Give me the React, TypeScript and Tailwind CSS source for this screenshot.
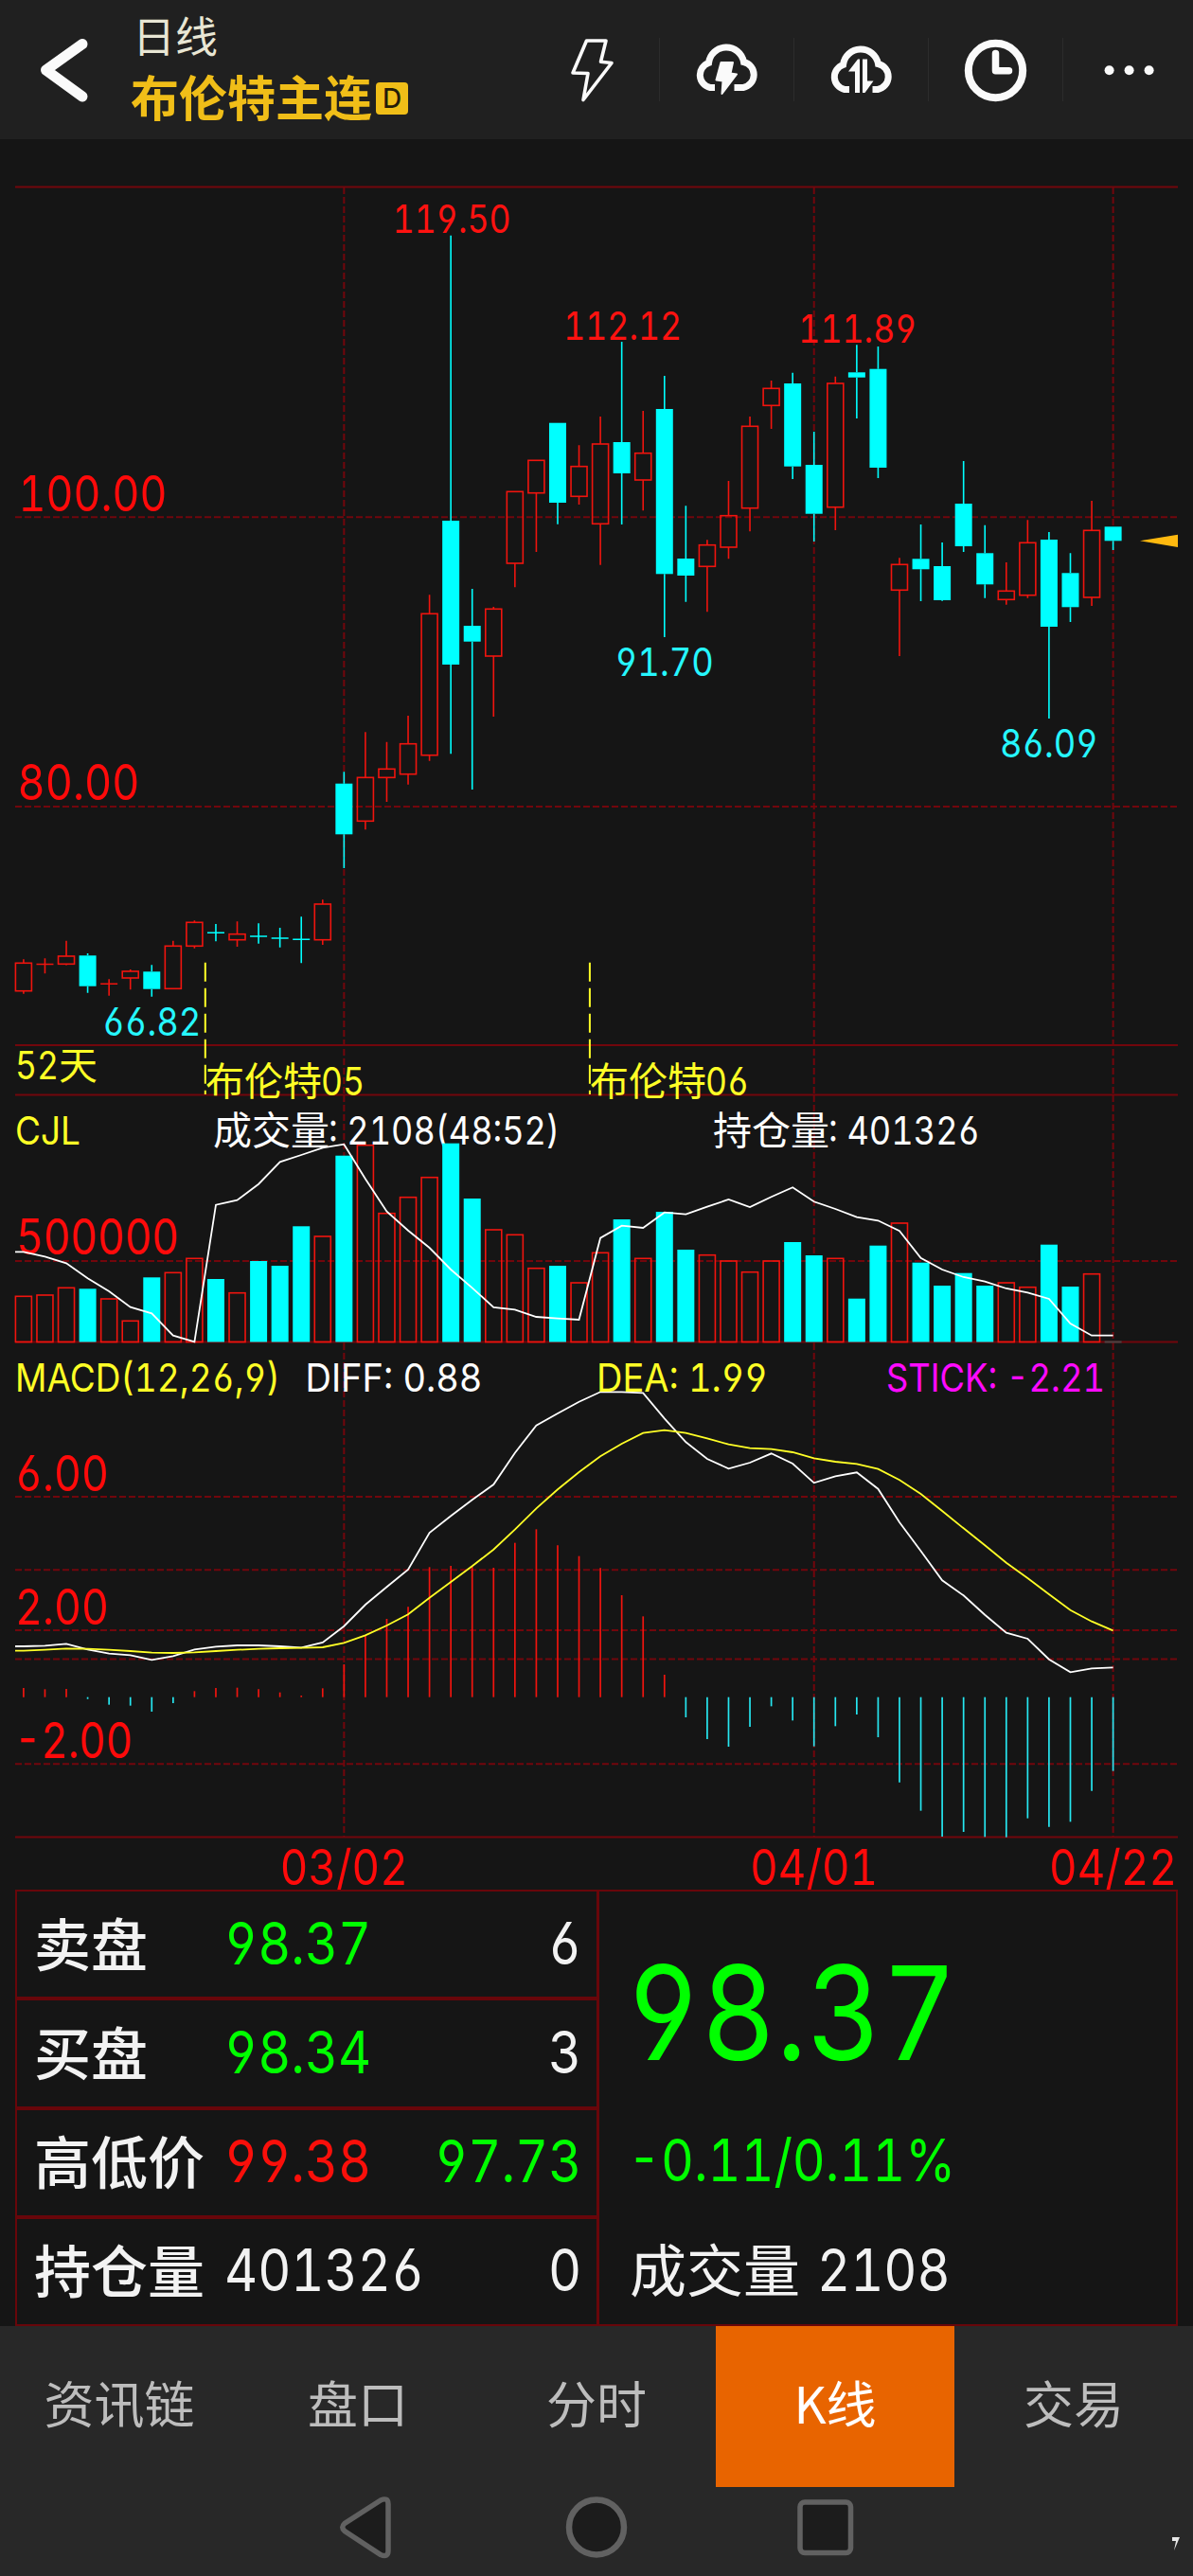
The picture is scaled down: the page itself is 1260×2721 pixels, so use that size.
import type { ReactNode } from 'react'
import { clsx } from 'clsx'

// kind, high, body top, body bottom, low, volume top
type Candle = ['u' | 'd', number, number, number, number, number]

const CANDLES: Candle[] = [
  ['u', 1013.3, 1017.3, 1046.7, 1049.7, 1369.3],
  ['u', 1012.3, 1018.5, 1018.5, 1028.3, 1368],
  ['u', 993.7, 1010, 1018.3, 1019.5, 1360.3],
  ['d', 1007, 1009.3, 1041.7, 1048.7, 1361.3],
  ['u', 1034.3, 1039.3, 1039.3, 1051.7, 1372],
  ['u', 1024, 1026, 1033, 1045.3, 1395.3],
  ['d', 1019.3, 1026.3, 1044.7, 1052.7, 1349.3],
  ['u', 993.7, 999.3, 1044.3, 1044.5, 1344.3],
  ['u', 972.3, 974.3, 999.3, 1001.7, 1329.3],
  ['d', 976, 985.3, 985.3, 994.3, 1351],
  ['u', 973.3, 986.7, 992.7, 1000, 1365.7],
  ['d', 975.3, 989, 989, 996.7, 1332],
  ['d', 980, 991, 991, 1000.7, 1337],
  ['d', 968.3, 992.3, 992.3, 1017.3, 1295.3],
  ['u', 950.3, 955, 992.7, 998, 1306],
  ['d', 815.3, 827.7, 881.3, 917, 1220.7],
  ['u', 773.3, 821.3, 867.3, 876.3, 1209.7],
  ['u', 783.7, 812.3, 821.3, 847, 1281.7],
  ['u', 756, 785.7, 817.7, 828.7, 1264.7],
  ['u', 628.3, 648.3, 797.7, 803.7, 1243.7],
  ['d', 248.7, 550, 702, 796.3, 1207.7],
  ['d', 622, 661, 677.7, 834, 1266],
  ['u', 641, 643.3, 693, 757, 1299],
  ['u', 519.3, 519.3, 595, 620.3, 1304.3],
  ['u', 486.3, 486.3, 520.7, 583, 1339.7],
  ['d', 446.7, 446.7, 531, 553.7, 1337],
  ['u', 470.3, 492.7, 524.3, 533, 1355],
  ['u', 440, 469, 553.3, 596.7, 1323.3],
  ['d', 361, 467, 500, 554, 1288],
  ['u', 434, 478.7, 507, 539.3, 1329.3],
  ['d', 397, 432, 606.3, 673, 1280],
  ['d', 534.3, 590, 608, 635.7, 1320],
  ['u', 570.3, 575.7, 598.3, 646.3, 1325.7],
  ['u', 508, 544.7, 578, 590.3, 1332],
  ['u', 440, 450.3, 536.7, 561.3, 1343.7],
  ['u', 402, 410.3, 428.3, 453, 1332],
  ['d', 393.7, 405, 492.7, 506, 1312],
  ['d', 456, 491, 542.7, 572, 1326],
  ['u', 397.7, 405, 535.7, 560, 1329.3],
  ['d', 364.3, 393.3, 398.7, 442, 1371.7],
  ['d', 366, 389.7, 494, 505, 1315.7],
  ['u', 589.3, 596.3, 623.3, 693, 1292],
  ['d', 554, 590.3, 601.3, 635, 1333.7],
  ['d', 573, 598, 634, 634.7, 1358],
  ['d', 487, 532, 577, 583, 1344.7],
  ['d', 554.7, 584.3, 617.3, 631.7, 1358],
  ['u', 594, 624.3, 633.3, 638.7, 1355],
  ['u', 549.3, 573.3, 628.7, 631.7, 1359.7],
  ['d', 562, 570, 662, 759, 1314.7],
  ['d', 584.3, 605.3, 641.3, 657, 1359],
  ['u', 529, 560.3, 631, 640, 1345.7],
  ['d', 556.3, 556.3, 571.3, 581, 1417.3],
]

// Series below are in thirds of a pixel from the given base line
const OPEN_INTEREST = [
  487, 502, 523, 571, 612, 662, 682, 752, 772, 338, 323, 272, 202, 180, 157, 146, 256, 359, 419, 474, 543, 601, 663,
  670, 693, 698, 702, 443, 404, 411, 362, 368, 344, 321, 345, 313, 283, 328, 351, 377, 388, 421, 506, 543, 567, 581,
  603, 616, 636, 714, 752, 752,
]

const DIFF = [
  537, 535, 529, 547, 560, 565, 580, 568, 547, 538, 534, 534, 537, 541, 525, 473, 405, 349, 294, 177, 124, 73, 24, -76,
  -163, -201, -238, -269, -269, -266, -185, -110, -57, -26, -45, -74, -42, 19, -2, -14, 38, 144, 235, 328, 376, 437,
  494, 513, 578, 619, 607, 604,
]

const DEA = [
  551, 548, 544, 545, 548, 552, 557, 558, 556, 552, 548, 545, 543, 542, 540, 526, 502, 471, 436, 383, 333, 283, 230,
  167, 100, 40, -15, -65, -105, -139, -148, -139, -122, -103, -91, -88, -78, -59, -48, -41, -25, 10, 54, 108, 163, 217,
  272, 321, 372, 422, 458, 487,
]

const STICK = [
  669, 673, 672, 704, 722, 725, 744, 717, 679, 669, 668, 673, 683, 693, 670, 594, 502, 450, 412, 286, 282, 285, 288,
  209, 166, 217, 251, 289, 375, 442, 627, 762, 831, 855, 792, 727, 772, 854, 790, 753, 825, 968, 1058, 1140, 1125, 1141,
  1142, 1082, 1109, 1093, 995, 932,
]

const UP = '#f0140e'
const DOWN = '#00ffff'
const GRID = '#72060c'
const YELLOW = '#ffff26'
const LEFT = 16
const RIGHT = 1244
const VOL_BASE = 1417.5
const STICK_ZERO = 698

const cx = (i: number) => 24.9 + i * 22.563

function toPoints(series: number[], base: number) {
  const pts = series.map((v, i) => `${cx(i).toFixed(1)},${(base + v / 3).toFixed(1)}`)
  return [`${LEFT},${(base + series[0] / 3).toFixed(1)}`, ...pts].join(' ')
}

interface LabelProps {
  x: number
  y: number
  w: number
  fill: string
  size?: number
  middle?: boolean
  children: string
}

function Label({ x, y, w, fill, size = 41, middle, children }: LabelProps) {
  return (
    <text
      x={middle ? x - w / 2 : x}
      y={y}
      fill={fill}
      fontSize={size}
      textLength={w}
      lengthAdjust="spacingAndGlyphs"
      className="font-[Inter,sans-serif] [font-feature-settings:'tnum','cv03','cv04']"
    >
      {children}
    </text>
  )
}

function Han({ x, y, fill, children }: { x: number; y: number; fill: string; children: string }) {
  return (
    <text x={x} y={y} fill={fill} fontSize={41} className="font-['Noto_Sans_CJK_SC',sans-serif]">
      {children}
    </text>
  )
}

function HLine({ y, dashed }: { y: number; dashed?: boolean }) {
  return (
    <line x1={LEFT} x2={RIGHT} y1={y} y2={y} stroke={GRID} strokeWidth={2} strokeDasharray={dashed ? '7 3' : undefined} />
  )
}

function VLines({ y1, y2 }: { y1: number; y2: number }) {
  return (
    <g stroke={GRID} strokeWidth={2} strokeDasharray="7 3">
      {[15, 37, 51].map((i) => (
        <line key={i} x1={cx(i)} x2={cx(i)} y1={y1} y2={y2} />
      ))}
    </g>
  )
}

function PricePanel() {
  return (
    <svg className="block overflow-visible" width="1260" height="1010" viewBox="0 147 1260 1010">
      <HLine y={197.5} />
      <HLine y={546.3} dashed />
      <HLine y={852} dashed />
      <HLine y={1104} />
      <HLine y={1156.5} />
      <VLines y1={198} y2={1157} />

      {CANDLES.map(([kind, high, top, bottom, low], i) => {
        const x = cx(i)
        const color = kind === 'u' ? UP : DOWN
        if (bottom - top < 1) {
          return (
            <path key={i} d={`M${x} ${high}V${low}M${x - 9} ${top}H${x + 9}`} stroke={color} strokeWidth={1.6} />
          )
        }
        return (
          <g key={i} stroke={color} strokeWidth={1.6}>
            <path d={`M${x} ${high}V${top}M${x} ${bottom}V${low}`} />
            {kind === 'u' ? (
              <rect x={x - 8.5} y={top} width={17} height={bottom - top} fill="none" />
            ) : (
              <rect x={x - 9} y={top} width={18} height={bottom - top} fill={DOWN} stroke="none" />
            )}
          </g>
        )
      })}

      <polygon points="1204,571.3 1244,564.7 1244,578" fill="#ffb90f" />

      {[216.8, 622.9].map((x) => (
        <line key={x} x1={x} x2={x} y1={1016.7} y2={1156} stroke={YELLOW} strokeWidth={2} strokeDasharray="20 7" />
      ))}

      <Label x={cx(20) + 1} y={246} w={125} fill="#ff1210" middle>119.50</Label>
      <Label x={cx(28) + 1} y={358.7} w={125} fill="#ff1210" middle>112.12</Label>
      <Label x={cx(39) + 1} y={362} w={125} fill="#ff1210" middle>111.89</Label>
      <Label x={cx(30)} y={713.7} w={104} fill="#26f7ff" middle>91.70</Label>
      <Label x={cx(48)} y={799.7} w={104} fill="#26f7ff" middle>86.09</Label>
      <Label x={cx(6)} y={1094} w={104} fill="#26f7ff" middle>66.82</Label>
      <Label x={19.5} y={540} w={157} size={52} fill="#ff0a0a">100.00</Label>
      <Label x={18.5} y={844.7} w={129} size={52} fill="#ff0a0a">80.00</Label>

      <Label x={16} y={1139.7} w={46} fill={YELLOW}>52</Label>
      <Han x={62} y={1140} fill={YELLOW}>天</Han>
      <Han x={217} y={1156.7} fill={YELLOW}>布伦特</Han>
      <Label x={339} y={1156.7} w={46} fill={YELLOW}>05</Label>
      <Han x={623} y={1156.7} fill={YELLOW}>布伦特</Han>
      <Label x={745} y={1156.7} w={46} fill={YELLOW}>06</Label>
    </svg>
  )
}

function VolumePanel() {
  return (
    <svg className="block overflow-visible" width="1260" height="262" viewBox="0 1157 1260 262">
      <HLine y={1332} dashed />
      <HLine y={VOL_BASE} />
      <VLines y1={1157} y2={1419} />
      <Label x={17} y={1324.7} w={172} size={52} fill="#ff0a0a">500000</Label>

      <Label x={16} y={1209} w={69} fill={YELLOW}>CJL</Label>
      <Han x={225} y={1209} fill="#fff">成交量</Han>
      <Label x={347} y={1209} w={244} fill="#fff">: 2108(48:52)</Label>
      <Han x={753} y={1209} fill="#fff">持仓量</Han>
      <Label x={875} y={1209} w={160} fill="#fff">: 401326</Label>

      {CANDLES.slice(0, -1).map(([kind, , , , , top], i) =>
        kind === 'u' ? (
          <rect
            key={i}
            x={cx(i) - 8.5}
            y={top}
            width={17}
            height={VOL_BASE - top}
            fill="none"
            stroke={UP}
            strokeWidth={1.6}
          />
        ) : (
          <rect key={i} x={cx(i) - 9} y={top} width={18} height={VOL_BASE - top} fill={DOWN} />
        ),
      )}
      <path d={`M${cx(51) - 9} 1417.5h18`} stroke="#4a4444" strokeWidth={2} />
      <polyline points={toPoints(OPEN_INTEREST, 1160)} fill="none" stroke="#fff" strokeWidth={1.8} />
    </svg>
  )
}

function MacdPanel() {
  return (
    <svg className="block overflow-visible" width="1260" height="577" viewBox="0 1419 1260 577">
      {[1581, 1658.3, 1722, 1752.5, 1863.3].map((y) => (
        <HLine key={y} y={y} dashed />
      ))}
      <HLine y={1940.5} />
      <VLines y1={1419} y2={1940} />

      {STICK.map((v, i) => (
        <line
          key={i}
          x1={cx(i)}
          x2={cx(i)}
          y1={1560 + STICK_ZERO / 3}
          y2={1560 + v / 3}
          stroke={v < STICK_ZERO ? '#f0140e' : '#26e6f0'}
          strokeWidth={1.7}
        />
      ))}

      <Label x={16} y={1574.7} w={99} size={52} fill="#ff0a0a">6.00</Label>
      <Label x={16} y={1715.7} w={99} size={52} fill="#ff0a0a">2.00</Label>
      <Label x={15} y={1856.7} w={125} size={52} fill="#ff0a0a">-2.00</Label>

      <polyline points={toPoints(DIFF, 1560)} fill="none" stroke="#fff" strokeWidth={1.8} />
      <polyline points={toPoints(DEA, 1560)} fill="none" stroke={YELLOW} strokeWidth={1.8} />

      <Label x={16} y={1470.3} w={280} fill={YELLOW}>MACD(12,26,9)</Label>
      <Label x={322.5} y={1470.3} w={187} fill="#fff">DIFF: 0.88</Label>
      <Label x={630} y={1470.3} w={181} fill={YELLOW}>DEA: 1.99</Label>
      <Label x={936} y={1470.3} w={231} fill="#ff0aff">STICK: -2.21</Label>

      <Label x={cx(15)} y={1990.7} w={135} size={52} fill="#ff0a0a" middle>03/02</Label>
      <Label x={cx(37)} y={1990.7} w={135} size={52} fill="#ff0a0a" middle>04/01</Label>
      <Label x={cx(51)} y={1990.7} w={135} size={52} fill="#ff0a0a" middle>04/22</Label>
    </svg>
  )
}

function HeaderIcon({ children, last }: { children: ReactNode; last?: boolean }) {
  return (
    <button type="button" className="relative flex h-[147px] w-[142px] shrink-0 items-center justify-center">
      <svg width="142" height="147" viewBox="0 0 142 147" fill="none" stroke="#fafafa">
        {children}
      </svg>
      {!last && <span className="absolute right-0 top-10 h-[67px] w-px bg-[#2c2c2c]" />}
    </button>
  )
}

function Header() {
  return (
    <header className="flex h-[147px] w-full overflow-hidden bg-[#202020]">
      <button type="button" className="w-[138px] shrink-0">
        <svg width="138" height="147" viewBox="0 0 138 147" fill="none">
          <path d="M87 46.5L48.5 74L87 102" stroke="#fafafa" strokeWidth="11" strokeLinecap="round" strokeLinejoin="round" />
        </svg>
      </button>
      <div className="w-[417px] shrink-0 pt-[14px] font-['Noto_Sans_CJK_SC',sans-serif]">
        <div className="pl-[2px] text-[45px] leading-[45px] text-[#e8e6d4]">日线</div>
        <div className="mt-[16px] flex items-center">
          <span className="text-[51px] leading-[52px] font-bold text-[#f0be18]">布伦特主连</span>
          <span className="mt-1.5 ml-[4px] flex h-[34px] w-[34px] items-center justify-center rounded-[4px] bg-[#f0be18] font-[Inter,sans-serif] text-[28px] leading-none font-medium text-[#241c08]">
            D
          </span>
        </div>
      </div>
      <HeaderIcon>
        <path
          d="M64.5 43H85L79.5 65.2L91 66.5L61 105.5L66 77.5L50 77Z"
          strokeWidth="3.6"
          strokeLinejoin="round"
        />
      </HeaderIcon>
      <HeaderIcon>
        <path
          d="M58 92.5H53A13.5 13.5 0 0 1 51.5 66.5A18.7 18.7 0 0 1 88.5 65.5A13.8 13.8 0 0 1 88 92.5H78.5"
          strokeWidth="7"
        />
        <path
          d="M64.5 66H77L74.5 77.5L81 78.5L65.5 99L66.5 85.5L59.5 84.5Z"
          fill="#fafafa"
          strokeWidth="2"
          strokeLinejoin="round"
        />
      </HeaderIcon>
      <HeaderIcon>
        <path
          d="M58 94.5H53A13.5 13.5 0 0 1 51.5 68.5A18.7 18.7 0 0 1 88.5 67.5A13.8 13.8 0 0 1 88 94.5H82.5"
          strokeWidth="7"
        />
        <path d="M69 98V62.5H67L57 75.5H64V98Z" fill="#fafafa" stroke="none" />
        <path d="M72 62.5H77V85.5H83.5L74.5 98H72Z" fill="#fafafa" stroke="none" />
      </HeaderIcon>
      <HeaderIcon>
        <circle cx="70.5" cy="74.5" r="28.7" strokeWidth="8" />
        <path d="M70.5 56.5V74.8H84.5" strokeWidth="7.5" strokeLinecap="round" strokeLinejoin="round" />
      </HeaderIcon>
      <HeaderIcon last>
        {[48.6, 69.6, 90.6].map((x) => (
          <circle key={x} cx={x} cy="74.3" r="5" fill="#fafafa" stroke="none" />
        ))}
      </HeaderIcon>
    </header>
  )
}

function Num({ children, className }: { children: string; className?: string }) {
  return (
    <span
      className={clsx(
        "inline-block font-[Inter,sans-serif] leading-none whitespace-pre [font-feature-settings:'tnum','cv03','cv04']",
        className,
      )}
    >
      {children}
    </span>
  )
}

const QUOTES = [
  { label: '卖盘', value: '98.37', valueClass: 'text-[#00ff00]', side: '6', sideClass: 'text-[#f2f2f2]' },
  { label: '买盘', value: '98.34', valueClass: 'text-[#00ff00]', side: '3', sideClass: 'text-[#f2f2f2]' },
  { label: '高低价', value: '99.38', valueClass: 'text-[#fa0f0a]', side: '97.73', sideClass: 'text-[#00ff00]' },
  { label: '持仓量', value: '401326', valueClass: 'text-[#f2f2f2]', side: '0', sideClass: 'text-[#f2f2f2]' },
]

function QuotePanel() {
  return (
    <section className="mx-4 flex h-[461px] border-2 border-[#68060a] font-['Noto_Sans_CJK_SC',sans-serif]">
      <div className="flex w-[615px] shrink-0 flex-col border-r-3 border-[#68060a]">
        {QUOTES.map((q, i) => (
          <div
            key={q.label}
            className={clsx(
              'flex flex-1 items-center pr-[16px] pb-1 pl-[18px]',
              i < QUOTES.length - 1 && 'border-b-4 border-[#68060a]',
            )}
          >
            <span className="w-[201px] shrink-0 pb-0.5 text-[60px] leading-none font-medium text-[#f2f2f2]">{q.label}</span>
            <Num className={clsx('mt-0.5 origin-left scale-x-[0.875] text-[62px]', q.valueClass)}>{q.value}</Num>
            <Num className={clsx('mt-0.5 ml-auto origin-right scale-x-[0.875] text-[62px]', q.sideClass)}>{q.side}</Num>
          </div>
        ))}
      </div>
      <div className="flex flex-1 flex-col items-start pl-[30px]">
        <Num className="mt-[59px] -ml-[2px] h-[138px] origin-left scale-x-[0.885] text-[138px] text-[#00ff00]">98.37</Num>
        <Num className="mt-[56px] origin-left scale-x-[0.87] text-[62px] text-[#00ff00]">-0.11/0.11%</Num>
        <div className="mt-[48px] flex items-center gap-[18px] pl-[2px] text-[60px] leading-none text-[#f2f2f2]">
          成交量
          <Num className="mt-[6px] origin-left scale-x-[0.875] text-[62px]">2108</Num>
        </div>
      </div>
    </section>
  )
}

const TABS = ['资讯链', '盘口', '分时', 'K线', '交易']

function TabBar() {
  return (
    <nav className="grid h-[170px] grid-cols-5 bg-[#282828] font-['Noto_Sans_CJK_SC',sans-serif]">
      {TABS.map((tab) => (
        <button
          key={tab}
          type="button"
          className={clsx(
            'flex items-center justify-center pb-[9px] text-[53px] leading-none',
            tab === 'K线' ? 'bg-[#e86400] text-white' : 'text-[#bdbdbd]',
          )}
        >
          {tab}
        </button>
      ))}
    </nav>
  )
}

function SystemBar() {
  return (
    <div className="h-[94px] bg-[#282828]">
      <svg className="block" width="1260" height="94" viewBox="0 2627 1260 94" fill="#1c1c1c" stroke="#616161">
        <path
          d="M402 2641L364 2665.5Q359.5 2669.5 364 2673.5L402 2698.5Q410 2702 410 2694V2645Q410 2637.5 402 2641Z"
          strokeWidth="5.5"
        />
        <circle cx="630" cy="2669.5" r="29" strokeWidth="6.5" />
        <rect x="845" y="2643" width="53.5" height="53.5" rx="5" strokeWidth="5.5" />
        <path d="M1238 2680H1246L1240 2694L1242 2684H1238Z" fill="#e8e8e8" stroke="none" />
      </svg>
    </div>
  )
}

export default function App() {
  return (
    <div className="flex h-[2721px] w-[1260px] flex-col overflow-hidden bg-[#151515]">
      <Header />
      <PricePanel />
      <VolumePanel />
      <MacdPanel />
      <QuotePanel />
      <TabBar />
      <SystemBar />
    </div>
  )
}
